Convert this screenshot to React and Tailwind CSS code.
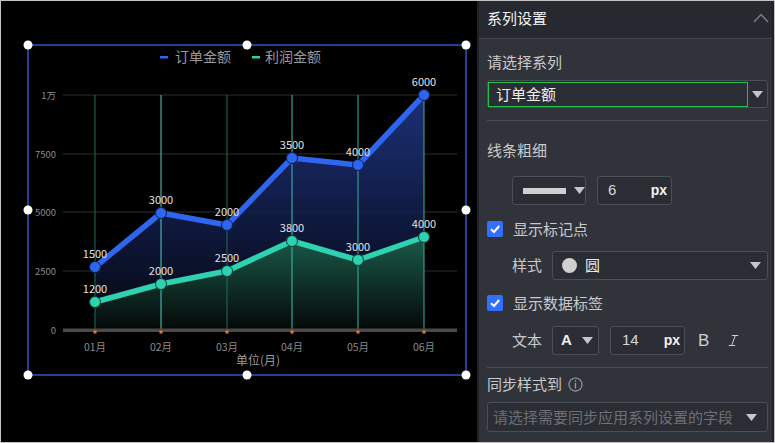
import { Italic } from "lucide-react";

const cjk = { fontFamily: '"Noto Sans CJK SC", "Noto Sans", sans-serif' };

const xs = [95, 161, 227, 292, 358, 424];
const months = ["01月", "02月", "03月", "04月", "05月", "06月"];
const blueY = [267, 213, 225, 158, 165, 95];
const blueLabels = ["1500", "3000", "2000", "3500", "4000", "6000"];
const greenY = [302, 284, 271, 241, 260, 237];
const greenLabels = ["1200", "2000", "2500", "3800", "3000", "4000"];
const vColors = ["#1c6f61", "#4fcfbd", "#1c6f61", "#3fbfae", "#35b3a2", "#35b3a2"];

const Caret = ({ className = "" }) => (
  <svg width="11" height="7" viewBox="0 0 11 7" className={className}>
    <path d="M0 0 L11 0 L5.5 7 Z" fill="#c4c6cb" />
  </svg>
);

const Check = () => (
  <div className="w-4 h-4 rounded-[2px] bg-[#3370ff] flex items-center justify-center">
    <svg width="12" height="12" viewBox="0 0 12 12">
      <path d="M2 6.2 L5 9 L10.2 3" fill="none" stroke="#fff" strokeWidth="2" />
    </svg>
  </div>
);

const Chart = () => {
  const blueLine = xs.map((x, i) => `${x},${blueY[i]}`).join(" ");
  const greenLine = xs.map((x, i) => `${x},${greenY[i]}`).join(" ");
  const handles = [
    [28, 45], [247, 45], [466, 45],
    [28, 210], [466, 210],
    [28, 375], [247, 375], [466, 375],
  ];

  return (
    <svg width="476" height="441" viewBox="1 1 476 441" style={cjk}>
      <defs>
        <linearGradient id="blueFill" x1="0" y1="95" x2="0" y2="330" gradientUnits="userSpaceOnUse">
          <stop offset="0" stopColor="#1f3584" stopOpacity="0.9" />
          <stop offset="1" stopColor="#05070f" stopOpacity="0.9" />
        </linearGradient>
        <linearGradient id="greenFill" x1="0" y1="237" x2="0" y2="330" gradientUnits="userSpaceOnUse">
          <stop offset="0" stopColor="#1b5a49" />
          <stop offset="1" stopColor="#040807" />
        </linearGradient>
      </defs>

      {/* legend */}
      <rect x="160" y="56" width="8" height="2.5" fill="#2f66f0" />
      <text x="175" y="62" fontSize="14" fill="#9a9a9a">订单金额</text>
      <rect x="252" y="56" width="8" height="2.5" fill="#2ed1b0" />
      <text x="265" y="62" fontSize="14" fill="#9a9a9a">利润金额</text>

      {/* grid */}
      {[95, 154, 212, 271].map((y) => (
        <line key={y} x1="63" x2="457" y1={y} y2={y} stroke="#2f2f2f" strokeWidth="1" />
      ))}
      {[["1万", 95], ["7500", 154], ["5000", 212], ["2500", 271], ["0", 330]].map(([t, y]) => (
        <text key={t} x="56" y={y + 3.5} fontSize="9.5" fill="#8a8a8a" textAnchor="end">{t}</text>
      ))}

      {/* areas */}
      <polygon points={`95,330 ${blueLine} 424,330`} fill="url(#blueFill)" />
      <polygon points={`95,330 ${greenLine} 424,330`} fill="url(#greenFill)" />

      {xs.map((x, i) => (
        <line key={x} x1={x} x2={x} y1="95" y2="330" stroke={vColors[i]} strokeWidth="1" />
      ))}

      {/* axis */}
      <rect x="63" y="328.5" width="394" height="3.5" fill="#4a4a4a" />
      {xs.map((x, i) => (
        <g key={x}>
          <rect x={x - 1.5} y="330.5" width="3" height="3" fill="#f07a1e" />
          <text x={x} y="351" fontSize="10.5" fill="#8a8a8a" textAnchor="middle">{months[i]}</text>
        </g>
      ))}
      <text x="258" y="365" fontSize="12" fill="#9a9a9a" textAnchor="middle">单位(月)</text>

      {/* series */}
      <polyline points={blueLine} fill="none" stroke="#2f66f0" strokeWidth="5.5" strokeLinejoin="round" />
      <polyline points={greenLine} fill="none" stroke="#2ed1b0" strokeWidth="5.5" strokeLinejoin="round" />
      {xs.map((x, i) => (
        <g key={"p" + x}>
          <circle cx={x} cy={blueY[i]} r="5.5" fill="#2f66f0" stroke="#0d1f5a" strokeWidth="1" />
          <circle cx={x} cy={greenY[i]} r="5.5" fill="#2ed1b0" stroke="#0b3e33" strokeWidth="1" />
          <text x={x} y={blueY[i] - 9} fontSize="11" fill="#e2e2e2" textAnchor="middle">{blueLabels[i]}</text>
          <text x={x} y={greenY[i] - 9} fontSize="11" fill="#e2e2e2" textAnchor="middle">{greenLabels[i]}</text>
        </g>
      ))}

      {/* selection */}
      <rect x="28" y="45" width="438" height="330" fill="none" stroke="#2c56c6" strokeWidth="1.5" />
      {handles.map(([x, y]) => (
        <circle key={x + "-" + y} cx={x} cy={y} r="4.5" fill="#fff" />
      ))}
    </svg>
  );
};

const Box = ({ className = "", children }) => (
  <div className={`h-[29px] rounded-[3px] border border-[#4b4e56] bg-[#2a2d33] flex items-center ${className}`}>
    {children}
  </div>
);

export default function App() {
  return (
    <div className="w-[775px] h-[443px] border border-[#c4c4c4] flex bg-black overflow-hidden" style={cjk}>
      <div className="w-[476px] h-full bg-black shrink-0">
        <Chart />
      </div>

      <div className="flex-1 h-full bg-[#303339] border-l-2 border-r-2 border-[#1f2126] flex flex-col text-[15px] text-[#c9cacd]">
        {/* header */}
        <div className="h-[38px] shrink-0 bg-[#262930] border-b border-[#42454c] flex items-center justify-between pl-2 pr-[3px] pb-[4px]">
          <span className="text-[#f2f2f2] leading-none">系列设置</span>
          <svg width="16" height="10" viewBox="0 0 16 10">
            <path d="M1 9 L8 1.5 L15 9" fill="none" stroke="#7d8087" strokeWidth="1.3" />
          </svg>
        </div>

        <div className="pl-2 pr-[4px] flex flex-col">
          <div className="mt-[12px] h-[22px] flex items-center">请选择系列</div>

          <div className="mt-[7px] h-[28px] rounded-[3px] border border-[#4b4e56] bg-[#2a2d33] flex items-center">
            <div className="h-[25px] flex-1 border border-[#22c04c] flex items-center pl-[7px] text-[#ececec]">订单金额</div>
            <div className="w-[19px] flex justify-center">
              <Caret />
            </div>
          </div>

          <div className="mt-[12px] h-px bg-[#4a4d54]" />

          <div className="mt-[18px] h-[22px] flex items-center">线条粗细</div>

          <div className="mt-[15px] pl-[25px] flex gap-[11px]">
            <Box className="w-[74px] pl-[10px] gap-[8px]">
              <div className="w-[43px] h-[6px] bg-[#cfcfcf]" />
              <Caret />
            </Box>
            <Box className="w-[75px] pl-[10px] justify-between">
              <span className="text-[#d8d8d8] font-['Liberation_Sans']">6</span>
              <span className="h-full flex items-center pr-[4px] font-bold text-[#f4f4f4] font-['Liberation_Sans'] text-[14px]">px</span>
            </Box>
          </div>

          <div className="mt-[13px] h-[22px] flex items-center gap-[10px]">
            <Check />
            <span>显示标记点</span>
          </div>

          <div className="mt-[11px] pl-[25px] flex items-center gap-[10px]">
            <span className="w-[30px]">样式</span>
            <Box className="flex-1 pl-[9px] pr-[6px]">
              <div className="w-[15px] h-[15px] rounded-full bg-[#d0d0d0]" />
              <span className="ml-[8px] text-[#e4e4e4]">圆</span>
              <div className="flex-1" />
              <Caret />
            </Box>
          </div>

          <div className="mt-[12px] h-[22px] flex items-center gap-[10px]">
            <Check />
            <span>显示数据标签</span>
          </div>

          <div className="mt-[12px] pl-[25px] flex items-center">
            <span className="w-[40px]">文本</span>
            <Box className="w-[47px] pl-[8px] gap-[10px]">
              <span className="font-bold text-[#eeeeee] font-['Liberation_Sans'] text-[15px]">A</span>
              <Caret />
            </Box>
            <Box className="ml-[11px] w-[75px] pl-[11px] justify-between">
              <span className="text-[#d8d8d8] font-['Liberation_Sans']">14</span>
              <span className="pr-[4px] font-bold text-[#f4f4f4] font-['Liberation_Sans'] text-[14px]">px</span>
            </Box>
            <span className="ml-[13px] text-[17px] text-[#cfcfcf] font-['Liberation_Sans']">B</span>
            <Italic size={15} strokeWidth={1.6} className="ml-[17px] text-[#cfcfcf]" />
          </div>

          <div className="mt-[12px] h-px bg-[#4a4d54]" />

          <div className="mt-[5px] h-[22px] flex items-center gap-[6px]">
            <span>同步样式到</span>
            <svg width="15" height="15" viewBox="0 0 16 16">
              <circle cx="8" cy="8" r="7" fill="none" stroke="#9a9ca1" strokeWidth="1.2" />
              <rect x="7.3" y="3.5" width="1.4" height="1.6" fill="#9a9ca1" />
              <rect x="7.3" y="6.3" width="1.4" height="6" fill="#9a9ca1" />
            </svg>
          </div>

          <div className="mt-[7px] h-[30px] rounded-[3px] border border-[#4b4e56] bg-[#2a2d33] flex items-center pl-[5px] pr-[10px]">
            <span className="flex-1 text-[#6c6f76] whitespace-nowrap">请选择需要同步应用系列设置的字段</span>
            <Caret />
          </div>
        </div>
      </div>
    </div>
  );
}
